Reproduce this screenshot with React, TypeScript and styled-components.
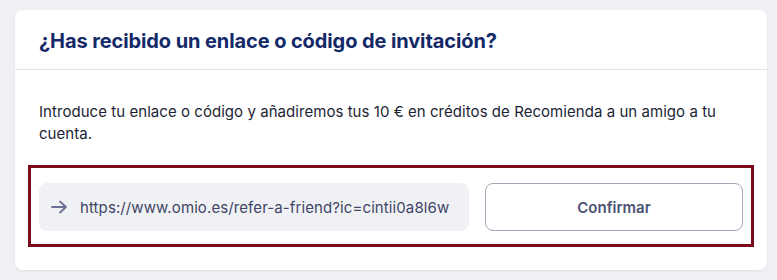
import React from 'react'
import styled, { createGlobalStyle } from 'styled-components'

const GlobalStyle = createGlobalStyle`
    html, body {
        margin: 0;
        padding: 0;
        background: #eef0f4;
    }
    body {
        font-family: Inter, "Noto Sans", sans-serif;
    }
`
const Page = styled.div`
    width: 777px;
    height: 280px;
    box-sizing: border-box;
    padding: 10px 10px 10px 15px;
`
const Card = styled.section`
    width: 752px;
    height: 260px;
    background: #ffffff;
    border-radius: 8px;
    box-shadow: 0 1px 2px rgba(20, 30, 60, 0.08);
    display: flex;
    flex-direction: column;
`
const CardHeader = styled.header`
    height: 60px;
    box-sizing: border-box;
    padding: 2px 24px 0;
    display: flex;
    align-items: center;
    border-bottom: 1px solid #e1e3e9;
`
const Title = styled.h2`
    margin: 0;
    font-size: 20px;
    font-weight: 700;
    color: #132968;
    letter-spacing: -0.1px;
`
const CardBody = styled.div`
    padding: 31px 24px 0;
`
const Intro = styled.p`
    margin: 0;
    font-size: 15px;
    line-height: 22px;
    letter-spacing: 0.05px;
    color: #1c1f35;
`
const Form = styled.form`
    margin: 20px -11px 0;
    padding: 15px 8px 13px;
    border: 3px solid #7a0b1c;
    display: flex;
    gap: 16px;
`
const LinkField = styled.label`
    flex: 0 0 430px;
    height: 48px;
    box-sizing: border-box;
    border-radius: 8px;
    background: #f0f1f5;
    display: flex;
    align-items: center;
    gap: 12px;
    padding: 0 12px;
    color: #6b7096;
`
const LinkInput = styled.input`
    border: none;
    background: transparent;
    outline: none;
    flex: 1;
    min-width: 0;
    padding: 0;
    font-family: inherit;
    font-size: 15px;
    letter-spacing: 0.1px;
    color: #3f4566;
`
const ConfirmButton = styled.button`
    flex: 1;
    height: 48px;
    border-radius: 8px;
    border: 1px solid #a3a7b8;
    background: #ffffff;
    font-family: inherit;
    font-size: 15px;
    font-weight: 600;
    color: #4a5175;
    cursor: pointer;
`

function Arrow() {
    return (
        <svg width="17" height="14" viewBox="0 0 17 14" fill="none">
            <path d="M1 7h14M9 1.5 15 7l-6 5.5" stroke="currentColor" strokeWidth="1.8" strokeLinecap="round" strokeLinejoin="round"/>
        </svg>
    )
}

export default function App() {
    const [link, setLink] = React.useState('https://www.omio.es/refer-a-friend?ic=cintii0a8l6w')

    return (
        <>
            <GlobalStyle/>
            <Page>
                <Card>
                    <CardHeader>
                        <Title>¿Has recibido un enlace o código de invitación?</Title>
                    </CardHeader>
                    <CardBody>
                        <Intro>
                            Introduce tu enlace o código y añadiremos tus 10 € en créditos de Recomienda a un amigo a tu cuenta.
                        </Intro>
                        <Form onSubmit={e => e.preventDefault()}>
                            <LinkField>
                                <Arrow/>
                                <LinkInput value={link} onChange={e => setLink(e.target.value)}/>
                            </LinkField>
                            <ConfirmButton type="submit">Confirmar</ConfirmButton>
                        </Form>
                    </CardBody>
                </Card>
            </Page>
        </>
    )
}
